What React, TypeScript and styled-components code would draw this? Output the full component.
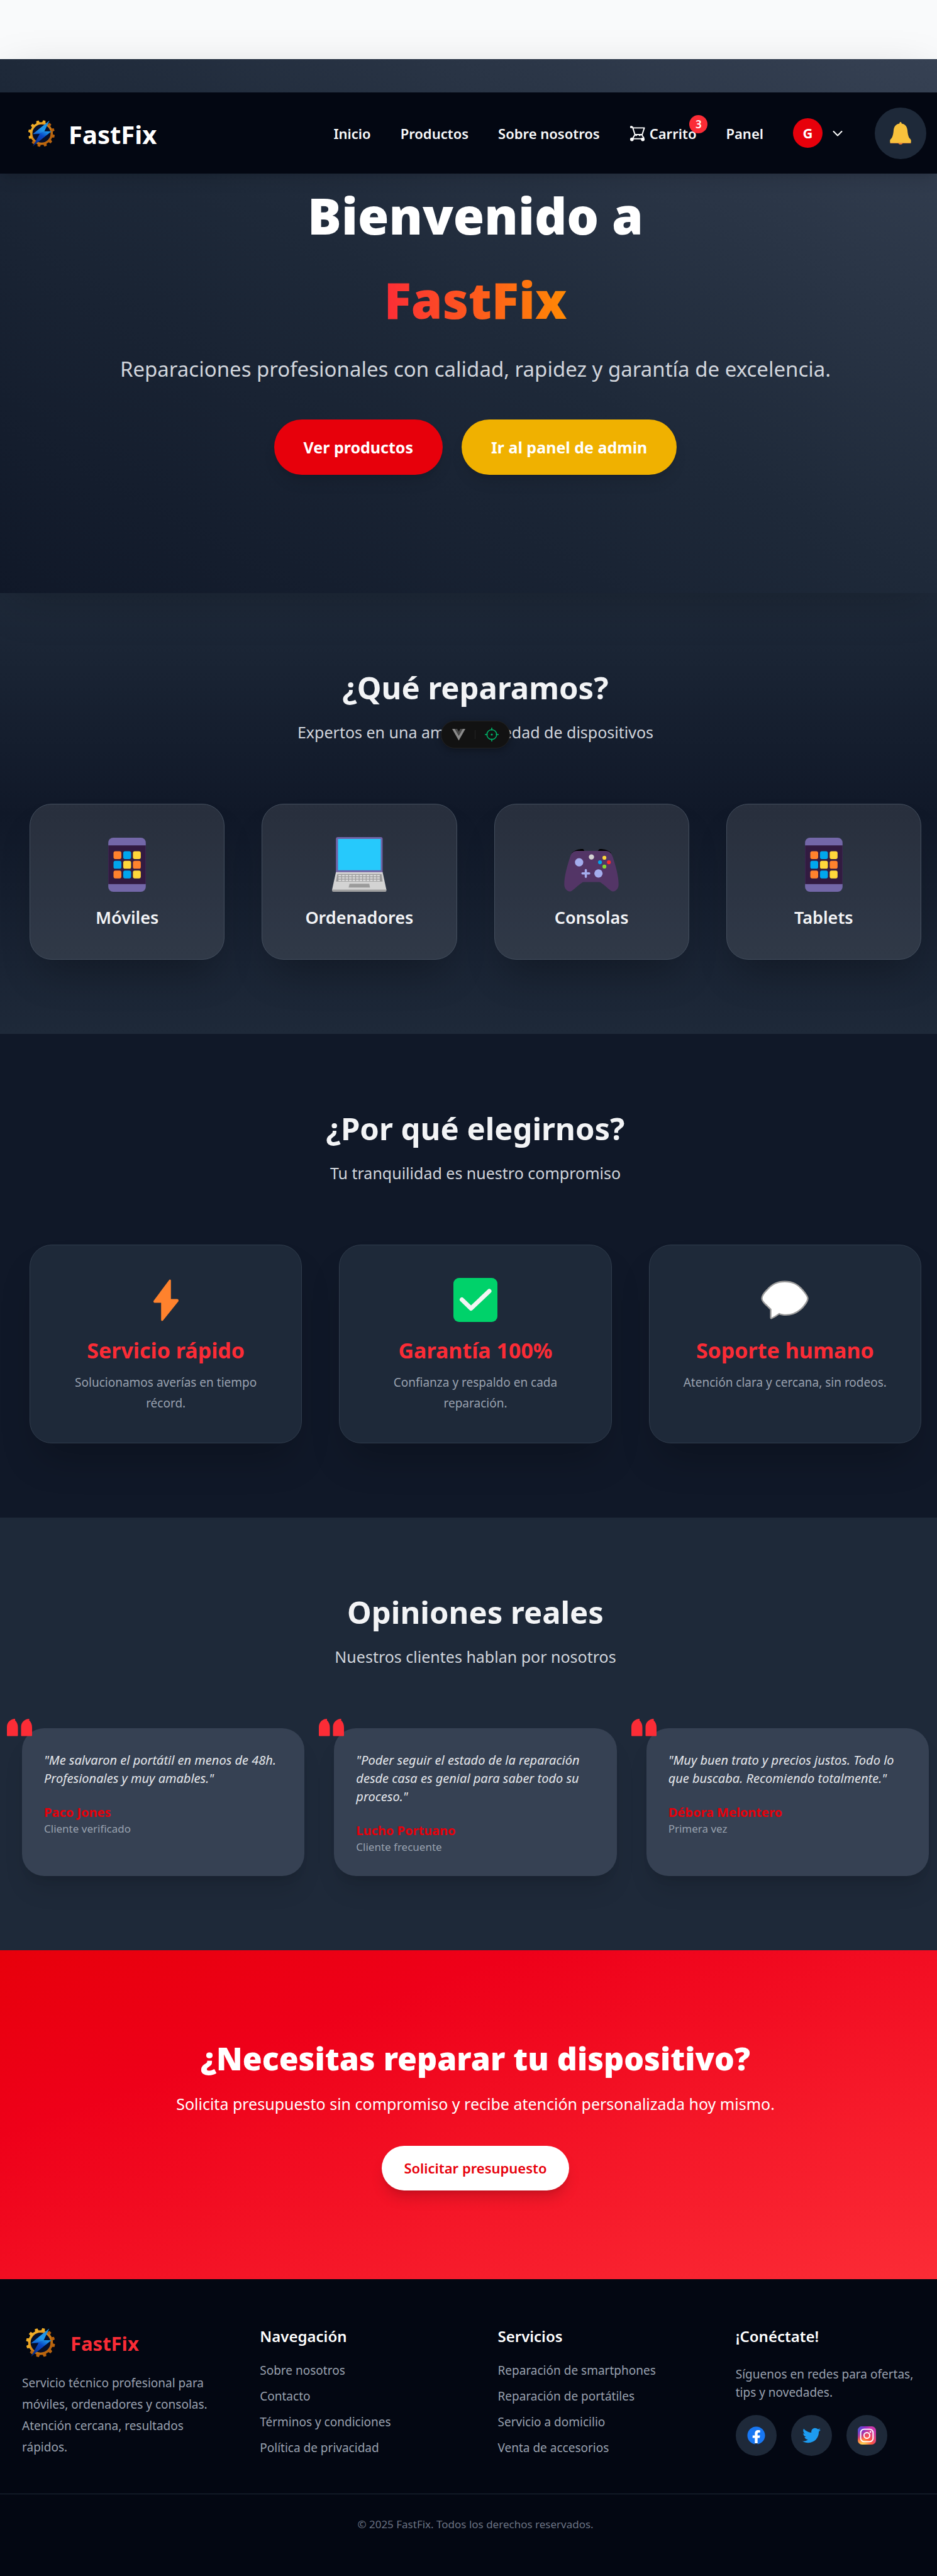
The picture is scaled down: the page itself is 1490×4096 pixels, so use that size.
import React from 'react';
import styled, { createGlobalStyle } from 'styled-components';
import { FaFacebook, FaTwitter } from 'react-icons/fa';

const GlobalStyle = createGlobalStyle`
  *, *::before, *::after { box-sizing: border-box; }
  body {
    margin: 0;
    background: #f9fafb;
    color: #f3f4f6;
    font-family: "Noto Sans", "Open Sans", sans-serif;
  }
  h1, h2, h3, p, ul, blockquote, figure { margin: 0; padding: 0; }
  ul { list-style: none; }
  a { color: inherit; text-decoration: none; }
  button { font-family: inherit; border: 0; cursor: pointer; }
  svg { display: block; flex: none; }
`;

/* ---------- layout ---------- */

const Page = styled.div`
  position: relative;
  overflow: hidden;
  padding-top: 94px;
`;

const Section = styled.section<{ $bg: string }>`
  padding: 118px 13px 118px 35px;
  background: ${p => p.$bg};
`;

/* ---------- top bar ---------- */

const TopBar = styled.header`
  position: absolute;
  top: 147px;
  left: 0;
  right: 0;
  z-index: 10;
  height: 129px;
  padding: 0 17px 0 39px;
  display: flex;
  align-items: center;
  justify-content: space-between;
  background: #030712;
  box-shadow: 0 15px 22px -4px rgba(0, 0, 0, 0.1), 0 6px 9px -6px rgba(0, 0, 0, 0.1);
`;

const Brand = styled.a<{ $size: number; $color: string; $gap: number }>`
  display: flex;
  align-items: center;
  gap: ${p => p.$gap}px;
  color: ${p => p.$color};
  font-size: ${p => p.$size}px;
  line-height: 55px;
  font-weight: 700;
`;

const BrandName = styled.span`
  padding-top: 3px;
`;

const Nav = styled.nav`
  display: flex;
  align-items: center;
  gap: 47px;
`;

const NavLink = styled.a`
  position: relative;
  display: flex;
  align-items: center;
  gap: 7px;
  font-size: 22px;
  line-height: 36px;
  font-weight: 600;
  color: #f9fafb;
`;

const Badge = styled.span`
  position: absolute;
  top: -11px;
  right: -18px;
  width: 29px;
  height: 29px;
  border-radius: 50%;
  background: #fb2c36;
  color: #fff;
  font-size: 17px;
  line-height: 29px;
  text-align: center;
`;

const UserButton = styled.button`
  display: flex;
  align-items: center;
  gap: 12px;
  padding: 0;
  background: none;
`;

const Avatar = styled.span`
  width: 47px;
  height: 47px;
  border-radius: 50%;
  background: #e7000b;
  color: #fff;
  font-size: 22px;
  font-weight: 700;
  line-height: 47px;
  text-align: center;
`;

const BellButton = styled.button`
  width: 82px;
  height: 82px;
  padding: 0;
  border-radius: 50%;
  display: grid;
  place-items: center;
  background: #1e2939;
`;

/* ---------- hero ---------- */

const Hero = styled.section`
  position: relative;
  padding: 181px 13px 188px 35px;
  display: flex;
  flex-direction: column;
  align-items: center;
  text-align: center;
  background: linear-gradient(to top right in oklab, #101828, #1e2939, #364153);
  box-shadow: 0 18px 73px -18px rgba(0, 0, 0, 0.25);
`;

const HeroTitle = styled.h1`
  display: flex;
  flex-direction: column;
  align-items: center;
  font-size: 80px;
  line-height: 134px;
  font-weight: 900;
  color: #fff;
`;

const HeroAccent = styled.span`
  color: transparent;
  background: linear-gradient(to right, #fb2c36, #ff8904);
  background-clip: text;
  -webkit-background-clip: text;
`;

const HeroLead = styled.p`
  margin-top: 17px;
  font-size: 33px;
  line-height: 53px;
  color: #d1d5dc;
`;

const Actions = styled.div`
  display: flex;
  gap: 30px;
  margin-top: 54px;
`;

const PillButton = styled.button<{ $bg: string }>`
  padding: 26px 47px;
  border-radius: 44px;
  background: ${p => p.$bg};
  color: #fff;
  font-size: 25px;
  line-height: 36px;
  font-weight: 700;
  box-shadow: 0 15px 22px -4px rgba(0, 0, 0, 0.1), 0 6px 9px -6px rgba(0, 0, 0, 0.1);
`;

/* ---------- section heading ---------- */

const Heading = styled.div`
  position: relative;
  text-align: center;
  margin-bottom: 93px;
`;

const Title = styled.h2`
  font-size: 49px;
  line-height: 64px;
  font-weight: 700;
  color: #f3f4f6;
`;

const Subtitle = styled.p`
  margin-top: 18px;
  font-size: 25px;
  line-height: 42px;
  color: #d1d5dc;
`;

const DevTools = styled.div`
  position: absolute;
  left: 50%;
  bottom: -5px;
  width: 110px;
  height: 44px;
  margin-left: -55px;
  display: flex;
  align-items: center;
  justify-content: center;
  border: 1px solid #222;
  border-radius: 22px;
  background: #121212;
  box-shadow: 0 3px 12px rgba(0, 0, 0, 0.3);
`;

const ToolButton = styled.button`
  padding: 0 15px;
  background: none;
`;

const ToolDivider = styled.span`
  width: 1px;
  height: 14px;
  background: #242424;
`;

/* ---------- cards ---------- */

const Grid = styled.div<{ $cols: number; $gap: number; $inset?: number }>`
  display: grid;
  grid-template-columns: repeat(${p => p.$cols}, minmax(0, 1fr));
  gap: ${p => p.$gap}px;
  padding: 0 ${p => p.$inset ?? 0}px;
`;

const Card = styled.article<{ $bg: string; $border: string }>`
  padding: 52px 47px 46px;
  display: flex;
  flex-direction: column;
  align-items: center;
  text-align: center;
  border: 1px solid ${p => p.$border};
  border-radius: 35px;
  background: ${p => p.$bg};
  box-shadow: 0 37px 60px -18px rgba(0, 0, 0, 0.25);
`;

const CardIcon = styled.div<{ $height: number; $align: string }>`
  display: flex;
  align-items: ${p => p.$align};
  height: ${p => p.$height}px;
  margin-bottom: 20px;
`;

const DeviceName = styled.h3`
  font-size: 27px;
  line-height: 41px;
  font-weight: 600;
`;

const FeatureName = styled.h3`
  font-size: 34px;
  line-height: 50px;
  font-weight: 700;
  color: #fb2c36;
`;

const FeatureText = styled.p`
  margin-top: 10px;
  font-size: 19px;
  line-height: 33px;
  color: #99a1af;
`;

const Review = styled.figure`
  position: relative;
  padding: 36px 35px 34px;
  border-radius: 35px;
  background: #364153;
  box-shadow: 0 29px 37px -7px rgba(0, 0, 0, 0.1), 0 12px 15px -9px rgba(0, 0, 0, 0.1);
`;

const ReviewMark = styled.span`
  position: absolute;
  top: -15px;
  left: -24px;
`;

const ReviewText = styled.blockquote`
  font-size: 20px;
  line-height: 29px;
  font-style: italic;
  color: #e5e7eb;
`;

const ReviewAuthor = styled.figcaption`
  margin-top: 25px;
  display: flex;
  flex-direction: column;
  font-size: 17px;
  line-height: 24px;
  color: #99a1af;
`;

const AuthorName = styled.strong`
  font-size: 20px;
  line-height: 29px;
  font-weight: 700;
  color: #e7000b;
`;

/* ---------- call to action ---------- */

const Cta = styled.section`
  padding: 141px 13px 141px 35px;
  text-align: center;
  background: linear-gradient(to bottom right, #e7000b, #ee0019 28%, #fb2c36);
`;

const CtaTitle = styled.h2`
  font-size: 50px;
  line-height: 62px;
  font-weight: 900;
  color: #fff;
`;

const CtaText = styled.p`
  margin: 20px 0 46px;
  font-size: 25px;
  line-height: 42px;
  color: #fff;
`;

const CtaButton = styled.button`
  padding: 17px 35px 18px;
  border-radius: 36px;
  background: #fff;
  color: #e7000b;
  font-size: 22px;
  line-height: 36px;
  font-weight: 600;
  box-shadow: 0 15px 22px -4px rgba(0, 0, 0, 0.15), 0 6px 9px -6px rgba(0, 0, 0, 0.15);
`;

/* ---------- footer ---------- */

const Footer = styled.footer`
  padding-top: 71px;
  background: #030712;
`;

const FooterGrid = styled.div`
  display: grid;
  grid-template-columns: repeat(4, minmax(0, 1fr));
  gap: 71px;
  padding: 0 13px 57px 35px;
  font-size: 19px;
  color: #99a1af;
`;

const FooterAbout = styled.p`
  margin-top: 18px;
  line-height: 34px;
`;

const FooterTitle = styled.h3`
  font-size: 24px;
  line-height: 40px;
  font-weight: 600;
  color: #fff;
`;

const FooterList = styled.ul`
  display: grid;
  gap: 11px;
  margin-top: 19px;
  line-height: 30px;
`;

const FooterText = styled.p`
  margin-top: 26px;
  line-height: 29px;
`;

const Socials = styled.div`
  display: flex;
  gap: 23px;
  margin-top: 21px;
`;

const SocialLink = styled.a<{ $color?: string }>`
  width: 65px;
  height: 65px;
  display: grid;
  place-items: center;
  border-radius: 50%;
  background: #1e2939;
  color: ${p => p.$color ?? '#fff'};
  font-size: 29px;
`;

const FacebookDisc = styled.span`
  border-radius: 50%;
  background: radial-gradient(circle, #fff 60%, transparent 62%);
`;

const Copyright = styled.p`
  padding: 36px 13px 71px 35px;
  border-top: 1px solid #1e2939;
  text-align: center;
  font-size: 17px;
  line-height: 24px;
  color: #6a7282;
`;

/* ---------- drawings ---------- */

const teeth = Array.from({ length: 12 }, (_, i) => i * 30);

const Logo = ({ size, id }: { size: number; id: string }) => (
  <svg width={size} height={size} viewBox="48 25 166 166" aria-hidden="true">
    <defs>
      <linearGradient id={`${id}-gear`} x1="70" y1="50" x2="190" y2="165" gradientUnits="userSpaceOnUse">
        <stop offset="0" stopColor="#ffd23c" />
        <stop offset="0.4" stopColor="#e0901a" />
        <stop offset="1" stopColor="#a34d06" />
      </linearGradient>
      <linearGradient id={`${id}-bolt`} x1="165" y1="50" x2="95" y2="170" gradientUnits="userSpaceOnUse">
        <stop offset="0" stopColor="#1478c8" />
        <stop offset="0.35" stopColor="#1b8ee6" />
        <stop offset="0.55" stopColor="#0a48c4" />
        <stop offset="1" stopColor="#0a2a80" />
      </linearGradient>
    </defs>
    <circle cx="131" cy="109" r="50" fill="#060f2a" stroke={`url(#${id}-gear)`} strokeWidth="11" />
    {teeth.map(a => (
      <path
        key={a}
        d="M122 58L125 44H137L140 58Z"
        transform={`rotate(${a + 12} 131 109)`}
        fill={a > 20 && a < 230 ? '#b8620e' : '#f0ac26'}
      />
    ))}
    <path d="M170 46L88 112L122 111L88 172L180 98L145 98Z" fill={`url(#${id}-bolt)`} />
    <path d="M170 46L88 112L124 106L145 98Z" fill="#2aa7f2" fillOpacity="0.45" />
  </svg>
);

const CartIcon = () => (
  <svg width="25" height="26" viewBox="0 0 26 26" fill="none" stroke="#fff" strokeWidth="2" aria-hidden="true">
    <path d="M1 2.500H5L9 15H21L24.500 4H6M9 15L5 22H22M20 15L24 21" strokeLinejoin="round" />
    <path d="M10 17L13 15M18 17L15 15" />
    <circle cx="3" cy="2.500" r="2" fill="#fff" stroke="none" />
    <circle cx="4" cy="23" r="3" fill="#fff" stroke="none" />
    <circle cx="22" cy="23" r="3" fill="#fff" stroke="none" />
  </svg>
);

const ChevronIcon = () => (
  <svg width="24" height="24" viewBox="0 0 24 24" fill="none" stroke="#fff" strokeWidth="2" strokeLinecap="round" strokeLinejoin="round" aria-hidden="true">
    <path d="M5.500 9L12 15.500L18.500 9" />
  </svg>
);

const BellIcon = () => (
  <svg width="34" height="36" viewBox="0 0 34 36" aria-hidden="true">
    <circle cx="17" cy="31.500" r="4.300" fill="#ff822d" />
    <path d="M17 0C18.200 0 18.700 1 18.700 2.400C25 3.200 27.500 8 28 13C28.500 19 29.500 24 32 26.500C34 28 34 30 33.500 33H0.500C0 30 0 28 2 26.500C4.500 24 5.500 19 6 13C6.500 8 9 3.200 15.300 2.400C15.300 1 15.800 0 17 0Z" fill="#f9c23c" />
    <path d="M0.500 33H33.500V33.900H0.500Z" fill="#d3883e" />
  </svg>
);

const appColors = ['#ff822d', '#00a6ed', '#ffd83b', '#00a6ed', '#ffd83b', '#ff822d', '#ff822d', '#00a6ed', '#ffd83b'];

const PhoneIcon = () => (
  <svg width="60" height="86" viewBox="0 0 61 88" aria-hidden="true">
    <rect width="61" height="88" rx="8" fill="#7367a8" />
    <rect y="12.500" width="61" height="63" fill="#321b41" />
    {appColors.map((c, i) => (
      <rect key={i} x={8.500 + (i % 3) * 15.800} y={22 + Math.floor(i / 3) * 15.700} width="12.800" height="12.800" rx="3" fill={c} />
    ))}
  </svg>
);

const keys = Array.from({ length: 36 }, (_, i) => i);

const LaptopIcon = () => (
  <svg width="87" height="87" viewBox="0 0 89 89" aria-hidden="true">
    <rect x="6.300" width="76" height="60" rx="3" fill="#7163a5" />
    <rect x="9.700" y="3" width="69.600" height="51" fill="#26c9fc" />
    <path d="M6.300 57H82.300L88.500 86H0Z" fill="#d3d3d3" />
    <path d="M0 85.500H88.500V87Q88.500 89 86.500 89H2Q0 89 0 87Z" fill="#a0a0a0" />
    <path d="M8.500 60H80.500L82.300 72.500H6.500Z" fill="#9b9b9b" />
    {keys.map(i => (
      <rect key={i} x={10.500 + (i % 12) * 5.700} y={61.500 + Math.floor(i / 12) * 3.800} width="4.500" height="2.400" fill="#dcdcdc" />
    ))}
    <path d="M28.500 76H60.500L61.800 82H27Z" fill="#9b9b9b" />
  </svg>
);

const GamepadIcon = () => (
  <svg width="87" height="68" viewBox="0 0 89 70" aria-hidden="true">
    <path d="M12 7C16 2 24 0 30 0Q32 0 33 4L30 7ZM77 7C73 2 65 0 59 0Q56 0 55 4L59 7Z" fill="#000" />
    <path d="M21 3H68C74 3 78 8 79.500 13C84 27 89 44 89 58C89 65 84 70 79.500 69.500C76 69 72 64 60 55Q59 54 57 54H32Q30 54 29 55C17 64 13 69 9.500 69.500C5 70 0 65 0 58C0 44 5 27 9.500 13C11 8 14 3 21 3Z" fill="#533566" />
    <circle cx="24.300" cy="21.700" r="6.800" fill="#a4aded" />
    <circle cx="56" cy="40" r="6.800" fill="#a4aded" />
    <path d="M35.300 34.500V45.500M29.800 40H40.800" stroke="#a4aded" strokeWidth="3.600" strokeLinecap="round" />
    <circle cx="44.500" cy="13" r="4.300" fill="#d3d3d3" />
    <circle cx="65.700" cy="14.300" r="3.200" fill="#ffd83b" />
    <circle cx="58.500" cy="21.700" r="3.200" fill="#00a6ed" />
    <circle cx="73" cy="21.700" r="3.200" fill="#f92f2f" />
    <circle cx="65.700" cy="28.700" r="3.200" fill="#86d72f" />
  </svg>
);

const BoltIcon = () => (
  <svg width="40" height="67" viewBox="0 0 41 68" aria-hidden="true">
    <path d="M26 0.500Q28.500 -0.500 28.500 2V32H39Q41.500 32.500 40.800 35.500L15.500 67Q13 69 12.500 66V38H1.500Q-0.500 37.500 0.200 35Z" fill="#ff822d" />
  </svg>
);

const CheckIcon = () => (
  <svg width="70" height="70" viewBox="0 0 70 70" aria-hidden="true">
    <rect width="70" height="70" rx="9" fill="#00d26a" />
    <path d="M13.500 34.500L28 48.500L57 21" fill="none" stroke="#f4f4f4" strokeWidth="7" strokeLinecap="round" strokeLinejoin="round" />
  </svg>
);

const BubbleIcon = () => (
  <svg width="76" height="62" viewBox="0 0 78 63" aria-hidden="true">
    <path d="M39 1.500C52 1.500 60 6 68 15C73 21 76.500 25 76.500 29C76.500 34 73 38 68 44C60 52 52 56 41 56C36 56 33 55.500 30 54C26 57 21 60 17.500 61.500Q16 62 16 60V47C14 45 13 44 10 41C4 36 1.500 33 1.500 29C1.500 25 5 20 10 15C18 6 26 1.500 39 1.500Z" fill="#fff" stroke="#9b9b9b" strokeWidth="2.400" />
  </svg>
);

const QuoteIcon = () => (
  <svg width="40" height="28" viewBox="0 0 40 28" fill="#fb2c36" aria-hidden="true">
    <path d="M0 26.500V13C0 5.500 6 0 13 0V2.500C16 5.500 17.500 9 17.500 14V26.500Q17.500 27.500 16.500 27.500H1Q0 27.500 0 26.500Z" />
    <path d="M22.500 26.500V13C22.500 5.500 28.500 0 35.500 0V2.500C38.500 5.500 40 9 40 14V26.500Q40 27.500 39 27.500H23.500Q22.500 27.500 22.500 26.500Z" />
  </svg>
);

const VueIcon = () => (
  <svg width="21" height="19" viewBox="0 0 21 19" aria-hidden="true">
    <path d="M0 0H4.300L10.500 10.800L16.700 0H21L10.500 18.500Z" fill="#8a8a8a" />
    <path d="M4.300 0H8L10.500 4.500L13 0H16.700L10.500 10.800Z" fill="#4a4a4a" />
  </svg>
);

const TargetIcon = () => (
  <svg width="22" height="22" viewBox="0 0 22 22" fill="none" stroke="#00b469" strokeWidth="1.600" aria-hidden="true">
    <circle cx="11" cy="11" r="7.800" />
    <path d="M11 0V4.500M11 17.500V22M0 11H4.500M17.500 11H22" />
    <circle cx="11" cy="11" r="1.600" fill="#00b469" stroke="none" />
  </svg>
);

const InstagramIcon = () => (
  <svg width="29" height="29" viewBox="0 0 30 30" aria-hidden="true">
    <defs>
      <radialGradient id="ig-warm" cx="0.27" cy="1.08" r="1">
        <stop offset="0" stopColor="#ffdd55" />
        <stop offset="0.15" stopColor="#ffc850" />
        <stop offset="0.5" stopColor="#ff543e" />
        <stop offset="1" stopColor="#c837ab" />
      </radialGradient>
      <radialGradient id="ig-cool" cx="-0.1" cy="0.05" r="0.75">
        <stop offset="0" stopColor="#3771c8" />
        <stop offset="0.3" stopColor="#5b4fd0" />
        <stop offset="1" stopColor="#6600ff" stopOpacity="0" />
      </radialGradient>
    </defs>
    <rect width="30" height="30" rx="7" fill="url(#ig-warm)" />
    <rect width="30" height="30" rx="7" fill="url(#ig-cool)" />
    <rect x="4.800" y="4.800" width="20.400" height="20.400" rx="5.600" fill="none" stroke="#fff" strokeWidth="2" />
    <circle cx="15" cy="15" r="4.700" fill="none" stroke="#fff" strokeWidth="2" />
    <circle cx="20.800" cy="9.200" r="1.400" fill="#fff" />
  </svg>
);

/* ---------- content ---------- */

const devices = [
  { name: 'Móviles', icon: <PhoneIcon /> },
  { name: 'Ordenadores', icon: <LaptopIcon /> },
  { name: 'Consolas', icon: <GamepadIcon /> },
  { name: 'Tablets', icon: <PhoneIcon /> },
];

const features = [
  { name: 'Servicio rápido', text: 'Solucionamos averías en tiempo récord.', icon: <BoltIcon /> },
  { name: 'Garantía 100%', text: 'Confianza y respaldo en cada reparación.', icon: <CheckIcon /> },
  { name: 'Soporte humano', text: 'Atención clara y cercana, sin rodeos.', icon: <BubbleIcon /> },
];

const reviews = [
  { text: '"Me salvaron el portátil en menos de 48h. Profesionales y muy amables."', name: 'Paco Jones', role: 'Cliente verificado' },
  { text: '"Poder seguir el estado de la reparación desde casa es genial para saber todo su proceso."', name: 'Lucho Portuano', role: 'Cliente frecuente' },
  { text: '"Muy buen trato y precios justos. Todo lo que buscaba. Recomiendo totalmente."', name: 'Débora Melontero', role: 'Primera vez' },
];

const footerLists = [
  { title: 'Navegación', links: ['Sobre nosotros', 'Contacto', 'Términos y condiciones', 'Política de privacidad'] },
  { title: 'Servicios', links: ['Reparación de smartphones', 'Reparación de portátiles', 'Servicio a domicilio', 'Venta de accesorios'] },
];

export default function App() {
  return (
    <Page>
      <GlobalStyle />
      <TopBar>
        <Brand href="#" $size={40} $color="#fff" $gap={16}>
          <Logo size={54} id="top" />
          <BrandName>FastFix</BrandName>
        </Brand>
        <Nav>
          <NavLink href="#">Inicio</NavLink>
          <NavLink href="#">Productos</NavLink>
          <NavLink href="#">Sobre nosotros</NavLink>
          <NavLink href="#">
            <CartIcon />
            Carrito
            <Badge>3</Badge>
          </NavLink>
          <NavLink href="#">Panel</NavLink>
          <UserButton aria-label="Cuenta">
            <Avatar>G</Avatar>
            <ChevronIcon />
          </UserButton>
          <BellButton aria-label="Notificaciones">
            <BellIcon />
          </BellButton>
        </Nav>
      </TopBar>

      <Hero>
        <HeroTitle>
          <span>Bienvenido a</span>
          <HeroAccent>FastFix</HeroAccent>
        </HeroTitle>
        <HeroLead>Reparaciones profesionales con calidad, rapidez y garantía de excelencia.</HeroLead>
        <Actions>
          <PillButton $bg="#e7000b">Ver productos</PillButton>
          <PillButton $bg="#f0b100">Ir al panel de admin</PillButton>
        </Actions>
      </Hero>

      <Section $bg="linear-gradient(to bottom in oklab, #1e2939, #101828, #1e2939)">
        <Heading>
          <Title>¿Qué reparamos?</Title>
          <Subtitle>Expertos en una amplia variedad de dispositivos</Subtitle>
          <DevTools>
            <ToolButton aria-label="Vue DevTools"><VueIcon /></ToolButton>
            <ToolDivider />
            <ToolButton aria-label="Inspeccionar"><TargetIcon /></ToolButton>
          </DevTools>
        </Heading>
        <Grid $cols={4} $gap={59} $inset={12}>
          {devices.map(d => (
            <Card key={d.name} $bg="rgba(255, 255, 255, 0.1)" $border="#434e5d">
              <CardIcon $height={87} $align="flex-end">{d.icon}</CardIcon>
              <DeviceName>{d.name}</DeviceName>
            </Card>
          ))}
        </Grid>
      </Section>

      <Section $bg="#101828">
        <Heading>
          <Title>¿Por qué elegirnos?</Title>
          <Subtitle>Tu tranquilidad es nuestro compromiso</Subtitle>
        </Heading>
        <Grid $cols={3} $gap={59} $inset={12}>
          {features.map(f => (
            <Card key={f.name} $bg="#1e2939" $border="#303c4c">
              <CardIcon $height={70} $align="center">{f.icon}</CardIcon>
              <FeatureName>{f.name}</FeatureName>
              <FeatureText>{f.text}</FeatureText>
            </Card>
          ))}
        </Grid>
      </Section>

      <Section $bg="#1e2939">
        <Heading>
          <Title>Opiniones reales</Title>
          <Subtitle>Nuestros clientes hablan por nosotros</Subtitle>
        </Heading>
        <Grid $cols={3} $gap={47}>
          {reviews.map(r => (
            <Review key={r.name}>
              <ReviewMark><QuoteIcon /></ReviewMark>
              <ReviewText>{r.text}</ReviewText>
              <ReviewAuthor>
                <AuthorName>{r.name}</AuthorName>
                {r.role}
              </ReviewAuthor>
            </Review>
          ))}
        </Grid>
      </Section>

      <Cta>
        <CtaTitle>¿Necesitas reparar tu dispositivo?</CtaTitle>
        <CtaText>Solicita presupuesto sin compromiso y recibe atención personalizada hoy mismo.</CtaText>
        <CtaButton>Solicitar presupuesto</CtaButton>
      </Cta>

      <Footer>
        <FooterGrid>
          <div>
            <Brand href="#" $size={31} $color="#fb2c36" $gap={18}>
              <Logo size={59} id="foot" />
              <BrandName>FastFix</BrandName>
            </Brand>
            <FooterAbout>
              Servicio técnico profesional para móviles, ordenadores y consolas. Atención cercana, resultados rápidos.
            </FooterAbout>
          </div>
          {footerLists.map(l => (
            <div key={l.title}>
              <FooterTitle>{l.title}</FooterTitle>
              <FooterList>
                {l.links.map(t => (
                  <li key={t}><a href="#">{t}</a></li>
                ))}
              </FooterList>
            </div>
          ))}
          <div>
            <FooterTitle>¡Conéctate!</FooterTitle>
            <FooterText>Síguenos en redes para ofertas, tips y novedades.</FooterText>
            <Socials>
              <SocialLink href="#" $color="#1877f2" aria-label="Facebook">
                <FacebookDisc><FaFacebook /></FacebookDisc>
              </SocialLink>
              <SocialLink href="#" $color="#1d9bf0" aria-label="Twitter"><FaTwitter /></SocialLink>
              <SocialLink href="#" aria-label="Instagram"><InstagramIcon /></SocialLink>
            </Socials>
          </div>
        </FooterGrid>
        <Copyright>© 2025 FastFix. Todos los derechos reservados.</Copyright>
      </Footer>
    </Page>
  );
}
